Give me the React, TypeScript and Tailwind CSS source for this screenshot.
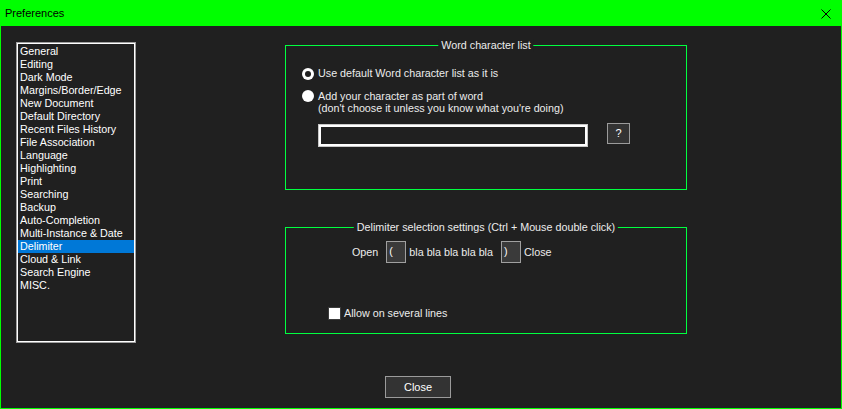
const categories = [
  "General",
  "Editing",
  "Dark Mode",
  "Margins/Border/Edge",
  "New Document",
  "Default Directory",
  "Recent Files History",
  "File Association",
  "Language",
  "Highlighting",
  "Print",
  "Searching",
  "Backup",
  "Auto-Completion",
  "Multi-Instance & Date",
  "Delimiter",
  "Cloud & Link",
  "Search Engine",
  "MISC.",
];

function GroupBox({
  title,
  className,
  children,
}: {
  title: string;
  className: string;
  children: React.ReactNode;
}) {
  return (
    <div className={`relative border border-[#00ff40] ${className}`}>
      <span className="absolute left-1/2 top-[-7px] -translate-x-1/2 whitespace-nowrap bg-[#202020] px-[3px] leading-[13px]">
        {title}
      </span>
      {children}
    </div>
  );
}

function Radio({ checked }: { checked?: boolean }) {
  return (
    <span className="flex h-[12px] w-[12px] shrink-0 items-center justify-center rounded-full bg-white">
      {checked && <span className="h-[6px] w-[6px] rounded-full bg-[#202020]" />}
    </span>
  );
}

export default function App() {
  return (
    <div
      className="flex h-[409px] w-[842px] flex-col bg-[#202020] text-[10.75px] text-[#ececec]"
      style={{ fontFamily: '"Liberation Sans", Arial, sans-serif' }}
    >
      {/* title bar */}
      <div className="flex h-[26px] shrink-0 items-center justify-between bg-[#00ff00] pl-[5px] pr-[11px] text-black">
        <span className="text-[11px] leading-[13px]">Preferences</span>
        <svg width="10" height="10" viewBox="0 0 10 10" className="mt-[1px]">
          <path d="M0.5 0.5 L9.5 9.5 M9.5 0.5 L0.5 9.5" stroke="#000" strokeWidth="1" />
        </svg>
      </div>

      <div className="flex flex-1 flex-col border-x border-b border-[#00ff00]">
        <div className="flex pl-[15px] pt-[16px]">
          {/* category list */}
          <div className="h-[301px] w-[120px] shrink-0 border border-[#a0a0a0]">
            <div className="h-full w-full border border-white bg-[#202020] pt-[1px]">
              {categories.map((c) => (
                <div
                  key={c}
                  className={`h-[13px] pl-[2px] leading-[13px] text-white ${
                    c === "Delimiter" ? "bg-[#0078d7]" : ""
                  }`}
                >
                  {c}
                </div>
              ))}
            </div>
          </div>

          {/* settings */}
          <div className="ml-[149px] mt-[3px] flex w-[402px] flex-col">
            <GroupBox title="Word character list" className="h-[145px] pl-[16px] pt-[21px]">
              <div className="flex items-center gap-[4px] leading-[13px]">
                <Radio checked />
                <span>Use default Word character list as it is</span>
              </div>
              <div className="mt-[10px] flex items-start gap-[4px] leading-[12px]">
                <Radio />
                <span>
                  Add your character as part of word
                  <br />
                  (don't choose it unless you know what you're doing)
                </span>
              </div>
              <div className="mt-[10px] flex items-start">
                <div className="ml-[16px] h-[23px] w-[270px] border border-[#c8c8c8]">
                  <div className="h-full w-full border-2 border-white bg-[#202020]" />
                </div>
                <button className="ml-[19px] mt-[-1px] h-[21px] w-[23px] border border-[#9b9b9b] bg-[#333333] text-[11px] leading-[19px] text-white">
                  ?
                </button>
              </div>
            </GroupBox>

            <GroupBox
              title="Delimiter selection settings (Ctrl + Mouse double click)"
              className="mt-[37px] h-[107px] pl-[42px] pt-[13px]"
            >
              <div className="flex items-center pl-[24px]">
                <span>Open</span>
                <span className="ml-[8px] h-[22px] w-[20px] border border-[#a0a0a0] bg-[#3a3a3a] pl-[2px] leading-[18px] text-white">
                  (
                </span>
                <span className="ml-[3px]">bla bla bla bla bla</span>
                <span className="ml-[8px] h-[22px] w-[20px] border border-[#a0a0a0] bg-[#3a3a3a] pl-[2px] leading-[18px] text-white">
                  )
                </span>
                <span className="ml-[3px]">Close</span>
              </div>
              <div className="mt-[44px] flex items-center gap-[3px]">
                <span className="h-[13px] w-[13px] border border-[#3c3c3c] bg-white" />
                <span className="leading-[13px]">Allow on several lines</span>
              </div>
            </GroupBox>
          </div>
        </div>

        <div className="mt-[33px] pl-[384px]">
          <button className="h-[22px] w-[66px] border border-[#9b9b9b] bg-[#333333] text-[11px] leading-[20px] text-white">
            Close
          </button>
        </div>
      </div>
    </div>
  );
}
